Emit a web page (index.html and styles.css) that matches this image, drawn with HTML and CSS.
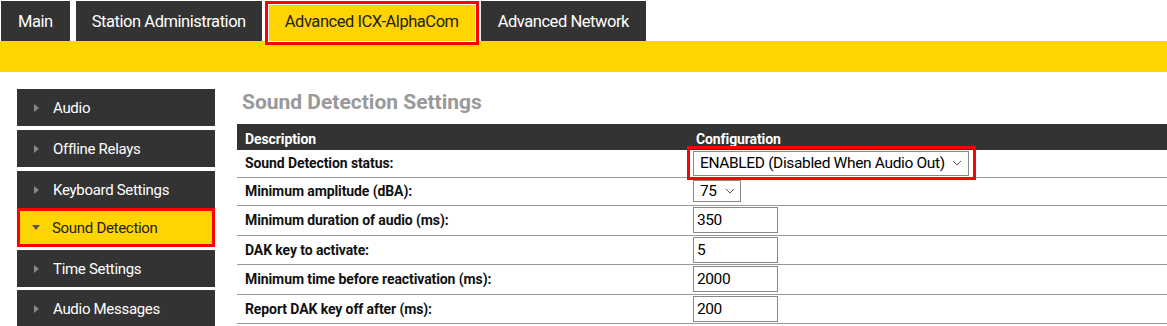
FILE: index.html
```html
<!DOCTYPE html>
<html>
<head>
<meta charset="utf-8">
<link rel="stylesheet" href="styles.css">
</head>
<body>
<nav class="tabs">
  <div class="tab">Main</div>
  <div class="tab">Station Administration</div>
  <div class="tab active">Advanced ICX-AlphaCom</div>
  <div class="tab">Advanced Network</div>
</nav>
<div class="banner"></div>
<div class="main">
  <aside class="side">
    <div class="item"><span class="arrow"></span>Audio</div>
    <div class="item"><span class="arrow"></span>Offline Relays</div>
    <div class="item"><span class="arrow"></span>Keyboard Settings</div>
    <div class="item current"><span class="arrow down"></span>Sound Detection</div>
    <div class="item"><span class="arrow"></span>Time Settings</div>
    <div class="item"><span class="arrow"></span>Audio Messages</div>
  </aside>
  <section class="content">
    <h1 class="title">Sound Detection Settings</h1>
    <table class="grid">
      <colgroup><col class="k1"><col></colgroup>
      <thead>
        <tr><th class="c1">Description</th><th class="c2">Configuration</th></tr>
      </thead>
      <tbody>
        <tr class="r1"><td>Sound Detection status:</td><td class="v"><span class="sel wide">ENABLED (Disabled When Audio Out)<svg class="chev" viewBox="0 0 10 6" width="10" height="6"><path d="M1 1 L5 5 L9 1" fill="none" stroke="#555" stroke-width="1"/></svg></span></td></tr>
        <tr class="r2"><td>Minimum amplitude (dBA):</td><td class="v"><span class="sel small">75<svg class="chev" viewBox="0 0 10 6" width="10" height="6"><path d="M1 1 L5 5 L9 1" fill="none" stroke="#555" stroke-width="1"/></svg></span></td></tr>
        <tr class="r3"><td>Minimum duration of audio (ms):</td><td class="v"><span class="inp">350</span></td></tr>
        <tr><td>DAK key to activate:</td><td class="v"><span class="inp">5</span></td></tr>
        <tr class="r3"><td>Minimum time before reactivation (ms):</td><td class="v"><span class="inp">2000</span></td></tr>
        <tr><td>Report DAK key off after (ms):</td><td class="v"><span class="inp">200</span></td></tr>
      </tbody>
    </table>
  </section>
</div>
</body>
</html>
```
FILE: styles.css
```css
* { box-sizing: border-box; }
body {
  margin: 0;
  font-family: Roboto, "Liberation Sans", sans-serif;
  background: #fff;
  overflow: hidden;
}
.tabs {
  display: flex;
  gap: 6px;
  padding: 1px 0 0 1px;
  height: 41px;
}
.tab {
  height: 40px;
  background: #333;
  color: #fff;
  font-size: 16.5px;
  letter-spacing: -0.45px;
  display: flex;
  align-items: center;
  padding: 0 17px;
}
.tab:nth-child(2) { padding: 0 16px; }
.tab.active {
  background: #ffd400;
  color: #222;
  height: 44px;
  margin: 0 -4px 0 -3px;
  border: 3px solid #f00;
  box-shadow: inset 0 0 0 1px #fff;
  padding: 0 17px 4px 17px;
  position: relative;
  z-index: 1;
}
.banner {
  height: 31px;
  background: #ffd400;
}
.main {
  display: flex;
  padding-left: 17px;
}
.side {
  width: 198px;
  margin-top: 17px;
  display: flex;
  flex-direction: column;
}
.item {
  height: 37px;
  background: #333;
  color: #fff;
  font-size: 15px;
  letter-spacing: -0.3px;
  display: flex;
  align-items: center;
  margin-bottom: 4px;
}
.arrow {
  width: 0;
  height: 0;
  border-left: 5px solid #888;
  border-top: 4.5px solid transparent;
  border-bottom: 4.5px solid transparent;
  margin: 0 14px 0 17px;
}
.arrow.down {
  border-left: 4.5px solid transparent;
  border-right: 4.5px solid transparent;
  border-top: 5px solid #555;
  border-bottom: 0;
  margin: 0 12px 0 12px;
}
.item.current {
  background: #ffd400;
  color: #222;
  height: 39px;
  border: 3px solid #f00;
  margin: -4px 0 3px 0;
}
.item.current + .item { margin-bottom: 3px; }
.content {
  flex: 1;
  margin-left: 22px;
}
.title {
  margin: 18px 0 10px 5px;
  font-size: 21px;
  font-weight: bold;
  color: #999;
  letter-spacing: 0;
  line-height: 24px;
}
.grid {
  width: 930px;
  border-collapse: collapse;
  table-layout: fixed;
  font-size: 14px;
  letter-spacing: -0.1px;
}
.k1 { width: 456px; }
.grid th {
  background: #333;
  color: #fff;
  text-align: left;
  height: 26px;
  padding: 4px 8px 0 8px;
  font-weight: bold;
  white-space: nowrap;
}
.grid th.c2 { padding-left: 3px; }
.grid td {
  height: 29px;
  padding: 0 8px;
  font-weight: bold;
  color: #111;
  white-space: nowrap;
  border-bottom: 1.5px solid #999;
}
.grid td.v { padding: 0; font-weight: normal; }
.grid tr.r1 td { height: 27px; }
.grid tr.r2 td { height: 28px; }
.grid tr.r3 td { height: 30px; }
.sel {
  display: inline-flex;
  align-items: center;
  vertical-align: middle;
  border: 1px solid #888;
  font-size: 15.5px;
  color: #000;
  letter-spacing: -0.35px;
  height: 25px;
  padding: 0 6px;
  justify-content: space-between;
  background: #fff;
}
.sel.wide { width: 276px; position: relative; }
.sel.wide::after {
  content: "";
  position: absolute;
  left: -7px;
  right: -8px;
  top: -6px;
  bottom: -5px;
  border: 3px solid #f00;
}
.sel.small { width: 48px; height: 22px; padding: 0 5px 0 6px; }
.chev { flex: none; }
.inp {
  display: inline-flex;
  align-items: center;
  vertical-align: middle;
  width: 85px;
  height: 26px;
  border: 1px solid #888;
  font-size: 15.5px;
  letter-spacing: -0.4px;
  padding: 0 3px;
  color: #000;
}
```
